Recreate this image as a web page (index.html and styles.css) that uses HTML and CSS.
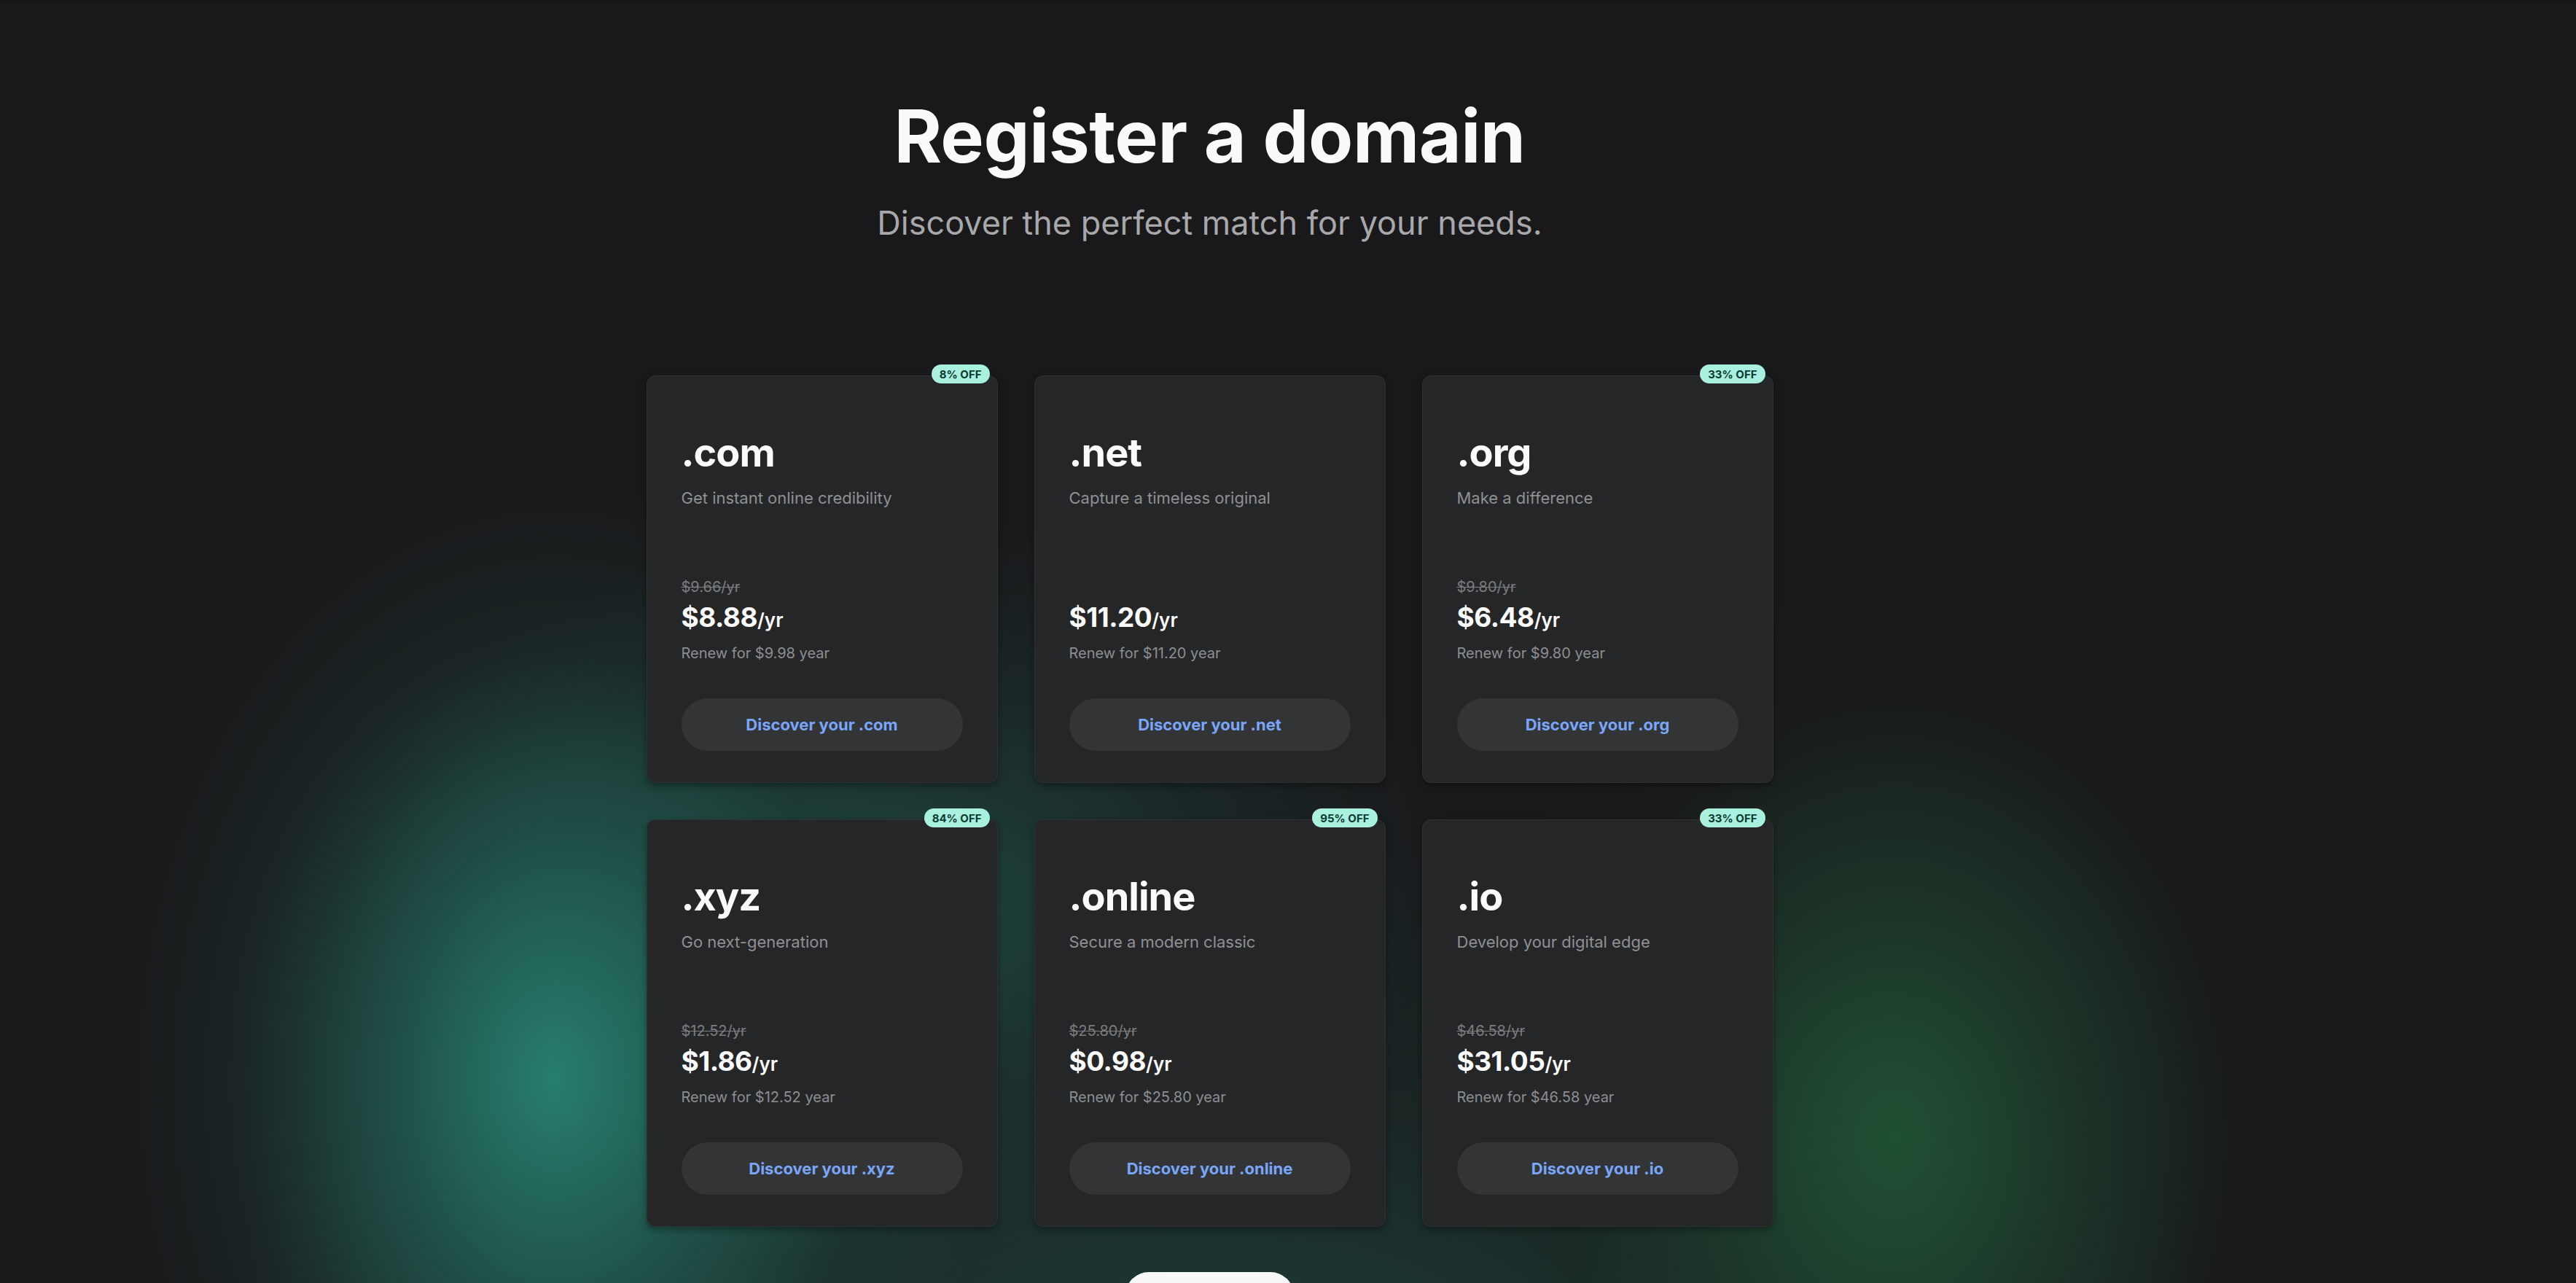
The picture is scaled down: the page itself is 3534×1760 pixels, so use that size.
FILE: index.html
```html
<!DOCTYPE html>
<html lang="en">
<head>
<meta charset="utf-8">
<title>Register a domain</title>
<link rel="stylesheet" href="styles.css">
</head>
<body>
<div class="topline"></div>
<main class="page">
  <header class="hero">
    <h1 class="title">Register a domain</h1>
    <p class="subtitle">Discover the perfect match for your needs.</p>
  </header>

  <section class="grid">
    <article class="card">
      <span class="badge">8% OFF</span>
      <h2 class="tld">.com</h2>
      <p class="tagline">Get instant online credibility</p>
      <div class="pricing">
        <s class="old">$9.66/yr</s>
        <p class="price"><strong>$8.88</strong><span>/yr</span></p>
        <p class="renew">Renew for $9.98 year</p>
      </div>
      <a class="cta" href="#">Discover your .com</a>
    </article>

    <article class="card">
      <h2 class="tld">.net</h2>
      <p class="tagline">Capture a timeless original</p>
      <div class="pricing">
        <p class="price"><strong>$11.20</strong><span>/yr</span></p>
        <p class="renew">Renew for $11.20 year</p>
      </div>
      <a class="cta" href="#">Discover your .net</a>
    </article>

    <article class="card">
      <span class="badge">33% OFF</span>
      <h2 class="tld">.org</h2>
      <p class="tagline">Make a difference</p>
      <div class="pricing">
        <s class="old">$9.80/yr</s>
        <p class="price"><strong>$6.48</strong><span>/yr</span></p>
        <p class="renew">Renew for $9.80 year</p>
      </div>
      <a class="cta" href="#">Discover your .org</a>
    </article>

    <article class="card">
      <span class="badge">84% OFF</span>
      <h2 class="tld">.xyz</h2>
      <p class="tagline">Go next-generation</p>
      <div class="pricing">
        <s class="old">$12.52/yr</s>
        <p class="price"><strong>$1.86</strong><span>/yr</span></p>
        <p class="renew">Renew for $12.52 year</p>
      </div>
      <a class="cta" href="#">Discover your .xyz</a>
    </article>

    <article class="card">
      <span class="badge">95% OFF</span>
      <h2 class="tld">.online</h2>
      <p class="tagline">Secure a modern classic</p>
      <div class="pricing">
        <s class="old">$25.80/yr</s>
        <p class="price"><strong>$0.98</strong><span>/yr</span></p>
        <p class="renew">Renew for $25.80 year</p>
      </div>
      <a class="cta" href="#">Discover your .online</a>
    </article>

    <article class="card">
      <span class="badge">33% OFF</span>
      <h2 class="tld">.io</h2>
      <p class="tagline">Develop your digital edge</p>
      <div class="pricing">
        <s class="old">$46.58/yr</s>
        <p class="price"><strong>$31.05</strong><span>/yr</span></p>
        <p class="renew">Renew for $46.58 year</p>
      </div>
      <a class="cta" href="#">Discover your .io</a>
    </article>
  </section>

  <div class="more">
    <a class="more-btn" href="#" aria-label="Show more domains"></a>
  </div>
</main>
</body>
</html>
```

FILE: styles.css
```css
* { box-sizing: border-box; }

html, body {
  margin: 0;
  padding: 0;
  height: 100%;
}

body {
  font-family: Inter, "Noto Sans", sans-serif;
  color: #fafafa;
  overflow: hidden;
  background:
    radial-gradient(ellipse 600px 820px at 760px 1480px, rgba(40, 136, 118, 0.9) 0%, rgba(35, 112, 98, 0.6) 38%, rgba(30, 80, 70, 0.22) 72%, rgba(25, 26, 28, 0) 100%),
    radial-gradient(ellipse 760px 520px at 1250px 1230px, rgba(34, 104, 92, 0.55) 0%, rgba(30, 80, 72, 0.25) 55%, rgba(25, 26, 28, 0) 100%),
    radial-gradient(ellipse 600px 780px at 2600px 1560px, rgba(32, 86, 54, 0.9) 0%, rgba(30, 72, 48, 0.55) 42%, rgba(25, 40, 32, 0.18) 76%, rgba(25, 26, 28, 0) 100%),
    radial-gradient(ellipse 1400px 820px at 1660px 1960px, rgba(30, 80, 70, 0.75) 0%, rgba(28, 56, 50, 0.4) 55%, rgba(25, 26, 28, 0) 100%),
    #19191b;
}

.topline {
  height: 6px;
  background: linear-gradient(#131416, #17181a);
}

.page {
  margin-right: 215px;
  display: flex;
  flex-direction: column;
  align-items: center;
}

.hero {
  display: flex;
  flex-direction: column;
  align-items: center;
  padding-top: 122px;
}

.title {
  margin: 0;
  font-size: 100px;
  line-height: 118px;
  font-weight: 700;
  letter-spacing: -0.5px;
  color: #fafafa;
}

.subtitle {
  margin: 32px 0 0;
  font-size: 45px;
  line-height: 56px;
  font-weight: 400;
  color: #a8a8aa;
}

.grid {
  margin-top: 181px;
  display: grid;
  grid-template-columns: repeat(3, 482px);
  gap: 50px;
}

.card {
  position: relative;
  height: 559px;
  padding: 73px 47px 43px;
  display: flex;
  flex-direction: column;
  background: #252628;
  border: 1px solid #303133;
  border-radius: 12px;
  box-shadow: 0 4px 10px rgba(0, 0, 0, 0.35);
}

.badge {
  position: absolute;
  top: -16px;
  right: 10px;
  height: 26px;
  padding: 0 11px;
  display: flex;
  align-items: center;
  border-radius: 13px;
  background: #a9f0de;
  color: #0b3b31;
  font-size: 15px;
  font-weight: 700;
}

.tld {
  margin: 0;
  font-size: 54px;
  line-height: 64px;
  font-weight: 700;
  letter-spacing: -1px;
  color: #fafafa;
}

.tagline {
  margin: 15px 0 0;
  font-size: 22px;
  line-height: 30px;
  color: #8f9092;
}

.pricing {
  margin-top: auto;
  display: flex;
  flex-direction: column;
}

.old {
  display: block;
  font-size: 20px;
  line-height: 26px;
  color: #7c7d7f;
  text-decoration-thickness: 1px;
}

.price {
  margin: 7px 0 0;
  line-height: 44px;
  color: #fafafa;
}

.price strong {
  font-size: 37px;
  font-weight: 700;
  letter-spacing: -0.5px;
}

.price span {
  font-size: 26px;
  font-weight: 600;
}

.renew {
  margin: 7px 0 0;
  font-size: 20px;
  line-height: 26px;
  color: #8d8e90;
}

.cta {
  margin-top: 49px;
  height: 72px;
  display: flex;
  align-items: center;
  justify-content: center;
  border-radius: 36px;
  background: #333436;
  color: #79a6f8;
  font-size: 22px;
  font-weight: 700;
  text-decoration: none;
}

.more {
  margin-top: 62px;
  display: flex;
  justify-content: center;
}

.more-btn {
  display: block;
  width: 231px;
  height: 64px;
  border-radius: 32px;
  background: #f8f8f8;
}
```
